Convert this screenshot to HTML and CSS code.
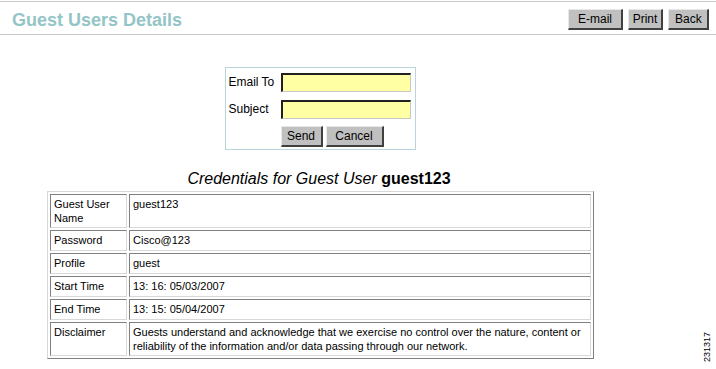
FILE: index.html
```html
<!DOCTYPE html>
<html>
<head>
<meta charset="utf-8">
<link rel="stylesheet" href="styles.css">
</head>
<body>
<div class="page">
  <div class="header">
    <h1 class="title">Guest Users Details</h1>
    <div class="actions">
      <button class="btn btn-email">E-mail</button>
      <button class="btn btn-print">Print</button>
      <button class="btn btn-back">Back</button>
    </div>
  </div>
  <div class="mail-wrap">
    <div class="mail-box">
      <div class="mail-row"><span class="mail-label">Email To</span><span class="input"></span></div>
      <div class="mail-row"><span class="mail-label">Subject</span><span class="input"></span></div>
      <div class="mail-buttons">
        <button class="btn btn-send">Send</button>
        <button class="btn btn-cancel">Cancel</button>
      </div>
    </div>
  </div>
  <div class="cred-title"><em>Credentials for Guest User</em> <strong>guest123</strong></div>
  <table class="cred">
    <tr class="r1"><td class="k">Guest User Name</td><td class="v">guest123</td></tr>
    <tr class="r"><td class="k">Password</td><td class="v">Cisco@123</td></tr>
    <tr class="r"><td class="k">Profile</td><td class="v">guest</td></tr>
    <tr class="r"><td class="k">Start Time</td><td class="v">13: 16: 05/03/2007</td></tr>
    <tr class="r"><td class="k">End Time</td><td class="v">13: 15: 05/04/2007</td></tr>
    <tr class="r6"><td class="k">Disclaimer</td><td class="v">Guests understand and acknowledge that we exercise no control over the nature, content or reliability of the information and/or data passing through our network.</td></tr>
  </table>
  <div class="fig-id">231317</div>
</div>
</body>
</html>
```

FILE: styles.css
```css
html, body {
  margin: 0;
  padding: 0;
  background: #ffffff;
}
body {
  font-family: "Liberation Sans", Arial, sans-serif;
  color: #000;
}
.page {
  position: relative;
  width: 716px;
  height: 369px;
  overflow: hidden;
}
.header {
  margin-top: 1px;
  height: 32px;
  border-top: 1px solid #c8c8c8;
  border-bottom: 1px solid #c8c8c8;
  display: flex;
  align-items: center;
  justify-content: space-between;
  padding: 0 7px 0 12px;
}
.title {
  margin: 0;
  font-size: 18px;
  font-weight: bold;
  color: #93c5c6;
  line-height: 20px;
  position: relative;
  top: 2px;
}
.actions {
  display: flex;
  gap: 5px;
  position: relative;
  top: 1px;
}
.btn {
  font-family: "Liberation Sans", Arial, sans-serif;
  font-size: 12px;
  color: #000;
  background: #c0c0c0;
  border-style: solid;
  border-width: 1px 2px 2px 1px;
  border-color: #e8e8e8 #404040 #404040 #e8e8e8;
  height: 21px;
  padding: 0 6px;
  margin: 0;
  line-height: 18px;
}
.btn-email { width: 55px; }
.btn-print { width: 35px; padding: 0 2px; }
.btn-back { width: 41px; }
.mail-wrap {
  display: flex;
  justify-content: center;
  padding-top: 32px;
  padding-right: 76px;
}
.mail-box {
  border: 1px solid #b8d4dc;
  padding: 4px 3px 2px 3px;
  width: 183px;
}
.mail-row {
  display: flex;
  align-items: center;
  height: 20px;
  margin-bottom: 7px;
}
.mail-label {
  font-size: 12px;
  width: 52px;
  flex: none;
}
.input {
  display: block;
  width: 127px;
  height: 16px;
  background: #ffffa4;
  border-style: solid;
  border-width: 2px 1px 1px 2px;
  border-color: #202020 #c8c8c8 #c8c8c8 #202020;
}
.mail-buttons {
  display: flex;
  gap: 3px;
  padding-left: 52px;
}
.btn-send { width: 42px; padding: 0; }
.btn-cancel { width: 58px; padding: 0; }
.cred-title {
  text-align: center;
  font-size: 16px;
  margin-top: 20px;
  line-height: 18px;
  padding-right: 78px;
}
.cred-title em { font-style: italic; }
.cred-title strong { font-weight: bold; }
.cred {
  margin-left: 47px;
  margin-top: 3px;
  width: 547px;
  border-collapse: separate;
  border-spacing: 2px;
  border-style: solid;
  border-width: 1px;
  border-color: #d8d8d8 #808080 #808080 #d8d8d8;
  font-size: 11px;
}
.cred td {
  border-style: solid;
  border-width: 1px;
  border-color: #808080 #d8d8d8 #d8d8d8 #808080;
  padding: 2px 3px;
  vertical-align: top;
  line-height: 14px;
}
.cred .k { width: 69px; }
.cred tr.r td { height: 15px; }
.cred tr.r1 td { height: 28px; }
.cred tr.r6 td { height: 28px; }
.fig-id {
  position: absolute;
  left: 702px;
  font-size: 9px;
  transform: rotate(-90deg);
  transform-origin: left top;
  top: 362px;
}
```
